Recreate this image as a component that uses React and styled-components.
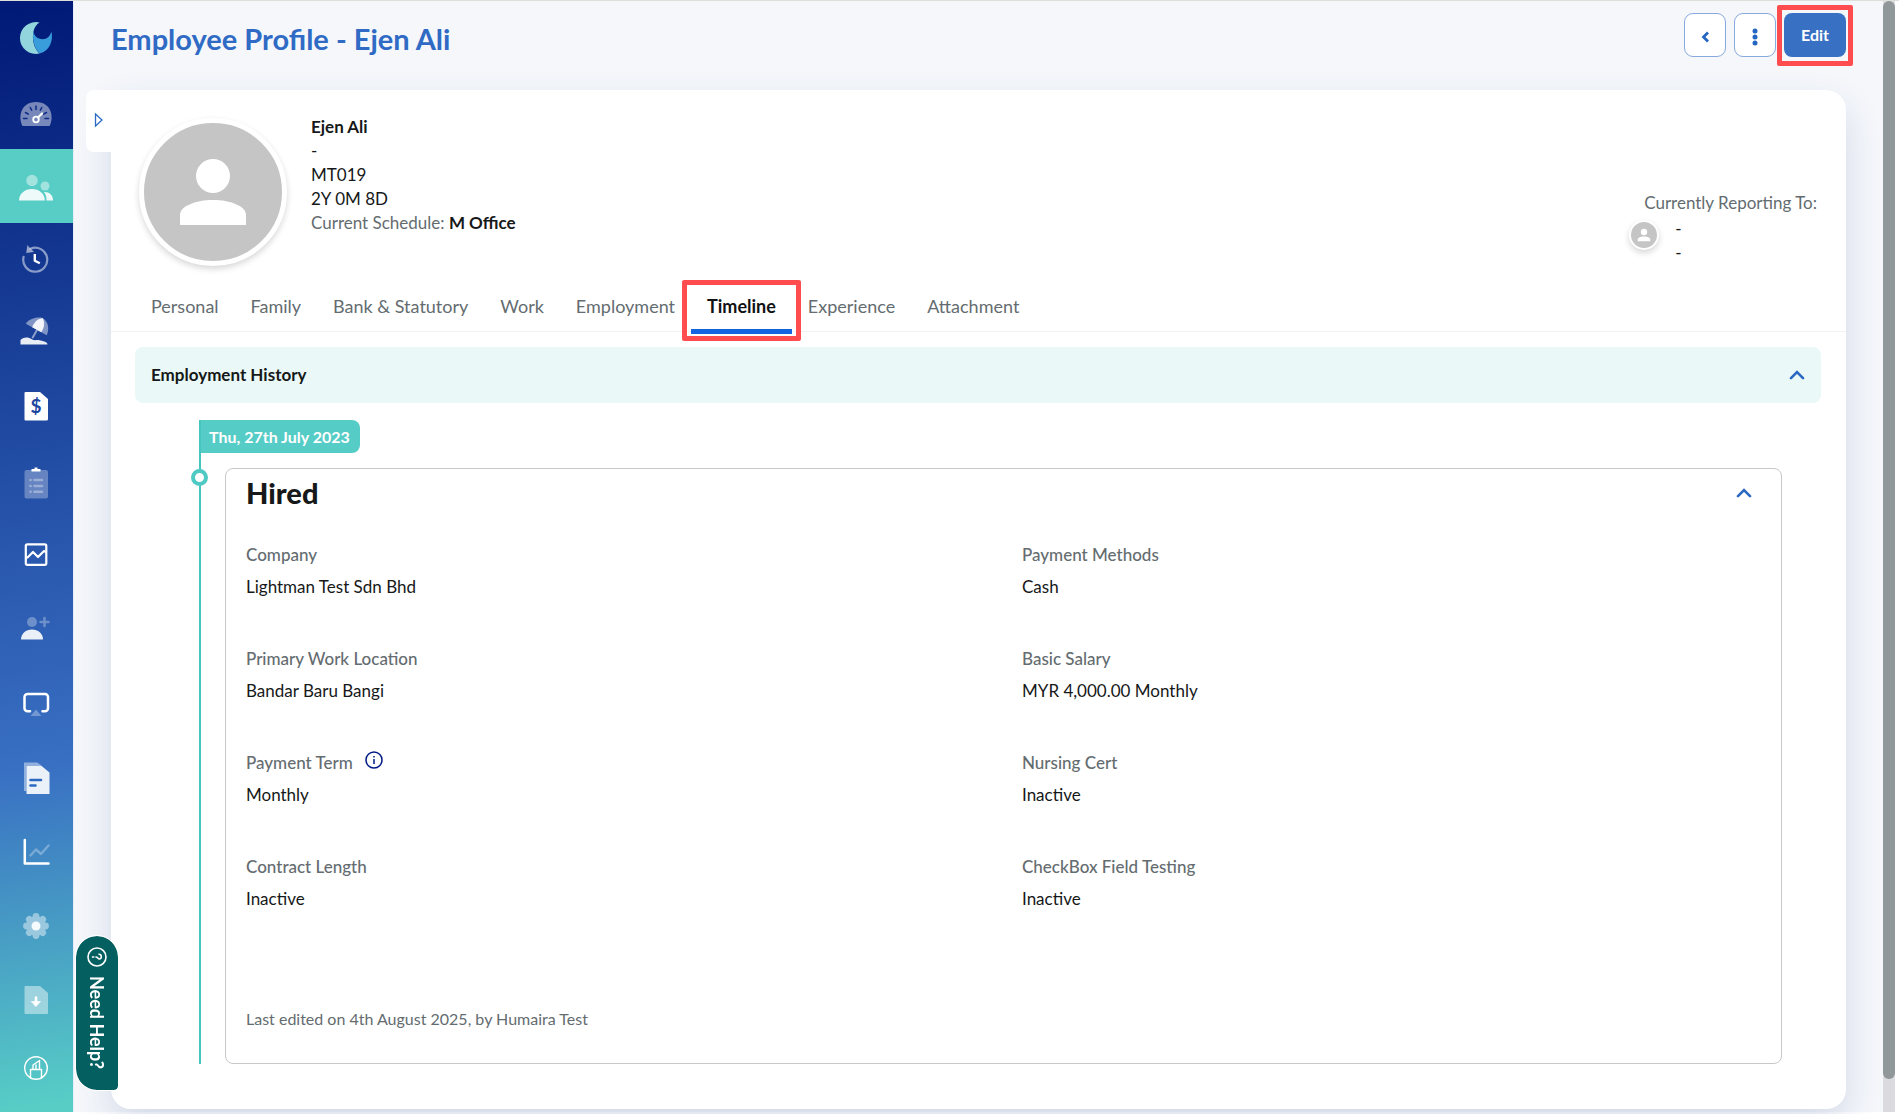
import React, { useState } from "react";
import styled, { createGlobalStyle } from "styled-components";

const GlobalStyle = createGlobalStyle`
  *, *::before, *::after {
    box-sizing: border-box;
  }
  body {
    margin: 0;
    background-color: #fff;
    color: #161819;
    font-family: Lato, "Open Sans", sans-serif;
    font-size: 17px;
    line-height: 24px;
  }
  button {
    font-family: inherit;
    cursor: pointer;
  }
  h1, h2, h3, p, dl, dd {
    margin: 0;
  }
`;

const Shell = styled.div`
  display: flex;
  min-height: 100vh;
  border-top: 1px solid #dddfdb;
  border-bottom: 2px solid #fff;
  padding-right: 4px;
`;

const Sidebar = styled.nav`
  display: flex;
  flex-direction: column;
  flex: none;
  width: 74px;
  background: linear-gradient(172deg, #001976 0%, #3970c3 69%, #57cdc6 99%);
  border-right: 1px solid #e6ecf8;
`;

const SideLink = styled.a`
  display: flex;
  align-items: center;
  justify-content: center;
  height: ${(props) => props.$height || 74}px;
  padding-right: 1px;
  background-color: ${(props) => (props.$active ? "#57cdc6" : "transparent")};
  svg {
    width: 36px;
    height: 36px;
  }
`;

const Main = styled.main`
  display: flex;
  flex-direction: column;
  flex: 1;
  min-width: 0;
  padding: 12px 37px 3px;
  background-color: #f5f7fb;
`;

const Header = styled.header`
  display: flex;
  justify-content: space-between;
  height: 77px;
`;

const Title = styled.h1`
  color: #2f6bc4;
  font-size: 29px;
  font-weight: 700;
  line-height: 52px;
`;

const Actions = styled.div`
  display: flex;
  gap: 8px;
  height: 44px;
`;

const IconButton = styled.button`
  display: flex;
  align-items: center;
  justify-content: center;
  width: 42px;
  padding: 4px 0 0;
  border: 1px solid #86a9de;
  border-radius: 9px;
  background-color: #fff;
  color: #2566c2;
`;

const EditButton = styled.button`
  width: 62px;
  height: 44px;
  padding: 0 0 2px;
  border: none;
  border-radius: 8px;
  background-color: #3871c4;
  color: #fff;
  font-size: 16px;
  font-weight: 700;
`;

const Highlight = styled.div`
  position: relative;
  &::after {
    content: "";
    position: absolute;
    inset: ${(props) => props.$inset};
    border: 5px solid #ff4d4f;
    border-radius: 2px;
    pointer-events: none;
  }
`;

const Card = styled.section`
  position: relative;
  flex: 1;
  padding-bottom: 45px;
  border-radius: 0 20px 20px 20px;
  background-color: #fff;
  box-shadow: 0 16px 36px rgba(40, 70, 130, 0.16);
`;

const Drawer = styled.button`
  position: absolute;
  left: -25px;
  top: 0;
  display: flex;
  align-items: center;
  width: 40px;
  height: 62px;
  padding: 0 0 2px 8px;
  border: none;
  border-radius: 8px 0 0 8px;
  background-color: #fff;
`;

const Profile = styled.div`
  display: flex;
  gap: 24px;
  padding: 25px 29px 0 28px;
  height: 184px;
`;

const Avatar = styled.span`
  flex: none;
  width: ${(props) => props.$size}px;
  height: ${(props) => props.$size}px;
  margin-top: 3px;
  border: ${(props) => props.$ring}px solid #fff;
  border-radius: 50%;
  background-color: #c5c5c5;
  box-shadow: 0 3px 6px rgba(0, 0, 0, 0.16);
  overflow: hidden;
  svg {
    display: block;
    width: 100%;
    height: 100%;
  }
`;

const Info = styled.div`
  flex: 1;
  h2 {
    font-size: 17px;
    line-height: 24px;
  }
`;

const Muted = styled.span`
  color: #646c70;
`;

const Reporting = styled.div`
  padding-top: 76px;
  color: #646c70;
`;

const Manager = styled.div`
  display: flex;
  gap: 16px;
  margin: 2px 0 0 -15px;
  color: #161819;
`;

const Tabs = styled.div`
  display: flex;
  height: 58px;
  padding: 0 24px;
  border-bottom: 1px solid #f1f2f3;
`;

const Tab = styled.button`
  height: 60px;
  padding: 8px 16px 0;
  border: none;
  border-bottom: 5px solid ${(props) => (props.$active ? "#1264e0" : "transparent")};
  background: none;
  color: ${(props) => (props.$active ? "#101214" : "#646c70")};
  font-size: 18px;
  font-weight: ${(props) => (props.$active ? 700 : 400)};
  white-space: nowrap;
`;

const SectionBar = styled.div`
  display: flex;
  align-items: center;
  justify-content: space-between;
  height: 56px;
  margin: 15px 25px 0 24px;
  padding: 0 16px;
  border-radius: 8px;
  background-color: #eaf8f7;
  h3 {
    font-size: 17px;
    font-weight: 700;
  }
`;

const Toggle = styled.button`
  display: flex;
  padding: 0;
  border: none;
  background: none;
`;

const Timeline = styled.div`
  margin: 17px 64px 0 88px;
  border-left: 2px solid #45c5bf;
`;

const DateBadge = styled.span`
  display: inline-block;
  padding: 0 10px 0 8px;
  border-radius: 0 8px 8px 0;
  background-color: #56ccc6;
  color: #fff;
  font-size: 16px;
  font-weight: 700;
  line-height: 33px;
`;

const Event = styled.article`
  position: relative;
  display: flex;
  flex-direction: column;
  margin: 15px 0 0 24px;
  min-height: 596px;
  padding: 7px 20px 32px;
  border: 1px solid #c8c8c8;
  border-radius: 8px;
  &::before {
    content: "";
    position: absolute;
    left: -35px;
    top: 0;
    width: 17px;
    height: 17px;
    border: 4px solid #4fc9c3;
    border-radius: 50%;
    background-color: #fff;
  }
`;

const EventHead = styled.div`
  display: flex;
  align-items: center;
  justify-content: space-between;
  padding-right: 9px;
  height: 34px;
  h3 {
    font-size: 29px;
    font-weight: 900;
    line-height: 34px;
  }
`;

const Fields = styled.dl`
  display: grid;
  grid-template-columns: 1fr 1fr;
  grid-auto-rows: 104px;
  column-gap: 37px;
  padding-top: 33px;
`;

const Field = styled.div`
  dt {
    display: flex;
    gap: 12px;
    height: 32px;
    color: #646c70;
    font-weight: 500;
  }
`;

const Footnote = styled.p`
  margin-top: auto;
  color: #646c70;
  font-size: 16px;
`;

const HelpButton = styled.button`
  position: fixed;
  left: 76px;
  bottom: 24px;
  display: flex;
  align-items: center;
  gap: 9px;
  width: 42px;
  padding: 11px 0 21px;
  border: none;
  border-radius: 21px 21px 4px 21px;
  outline: 1px solid #fff;
  background-color: #045f61;
  color: #fff;
  font-size: 18px;
  font-weight: 700;
  writing-mode: vertical-rl;
`;

const ScrollTrack = styled.div`
  flex: none;
  width: 12px;
  background-color: #dbdbdf;
`;

const ScrollThumb = styled.div`
  height: 97%;
  border-radius: 6px;
  background-color: #90989a;
`;

const Icon = ({ children }) => (
  <svg viewBox="0 0 36 36" fill="none" strokeLinecap="round" strokeLinejoin="round" aria-hidden="true">
    {children}
  </svg>
);

const Person = () => (
  <svg viewBox="0 0 138 138" aria-hidden="true">
    <circle cx="69" cy="53" r="17" fill="#fff" />
    <path d="M36 102V92c0-9 16-15 33-15s33 6 33 15v10z" fill="#fff" />
  </svg>
);

const Chevron = () => (
  <svg width="16" height="10" viewBox="0 0 16 10" fill="none" aria-hidden="true">
    <path d="M2 8.2L8 2.2l6 6" stroke="#2b68c2" strokeWidth="2.6" strokeLinecap="round" />
  </svg>
);

const light = { fill: "#fff", fillOpacity: 0.9 };
const faded = { fill: "#fff", fillOpacity: 0.45 };

const menu = [
  {
    label: "Dashboard",
    icon: (
      <>
        <path d="M4.5 32C0 24 2 8 18 8s18 16 13.5 24z" {...faded} />
        <path
          d="M5.5 24.5H9M7.5 18.5l2.8 1.6M12.2 13.5l1.5 2.7M18 12v3.5M23.8 13.5l-1.5 2.7M28.5 18.5l-2.8 1.6M30.5 24.5H27"
          stroke="#0b2a86"
          strokeWidth="1.5"
        />
        <circle cx="18" cy="25.5" r="2.8" stroke="#fff" strokeWidth="1.8" />
        <path d="M20 23.5l4-4" stroke="#fff" strokeWidth="2.2" />
      </>
    ),
  },
  {
    label: "Employees",
    icon: (
      <>
        <circle cx="14" cy="12.5" r="5.8" {...faded} />
        <circle cx="27" cy="18" r="4.5" {...faded} />
        <path d="M1 32.5C1 25.5 7 21 14 21s12.8 4.5 12.8 11.5z" {...light} />
        <path d="M26.5 24c5 0 8.5 3 8.5 8.5h-6.5c0-3.5-.5-5.8-2.5-8.5z" {...light} />
      </>
    ),
  },
  {
    label: "Attendance",
    icon: (
      <>
        <path d="M12.5 6.7A12 12 0 1 1 5.6 14.8" stroke="#fff" strokeOpacity="0.5" strokeWidth="2.2" />
        <path d="M9.5 3.8L8.5 10.8l7-1z" fill="#fff" fillOpacity="0.55" stroke="#fff" strokeOpacity="0.2" />
        <path d="M16.8 12v6.7l5 2.6" stroke="#fff" strokeWidth="2.4" strokeLinecap="butt" />
      </>
    ),
  },
  {
    label: "Leave",
    icon: (
      <>
        <path d="M7.8 7.7C11 3 18 .5 24.8 2c5 3.500 7 10 4 17.300z" {...faded} />
        <path d="M14.2 11.3C16 6 20 2.5 24.8 2.3c2 4 1.7 9.7-1.6 14z" {...light} />
        <path d="M18.7 14.5l-4 7" stroke="#fff" strokeOpacity="0.5" strokeWidth="2" />
        <path d="M2.5 28.5V24c2-3 8-3.5 11-1 2 2 5 .5 9 1.5s7 1.5 7 4z" {...light} />
      </>
    ),
  },
  {
    label: "Payroll",
    icon: (
      <>
        <path d="M7.5 2H22l8 7v20a1.5 1.5 0 0 1-1.5 1.5h-21a1 1 0 0 1-1-1V3a1 1 0 0 1 1-1z" fill="#fff" />
        <text x="18" y="23" textAnchor="middle" fontSize="19" fontWeight="700" fill="#1c469f">
          $
        </text>
      </>
    ),
  },
  {
    label: "Claims",
    icon: (
      <>
        <rect x="6.5" y="6" width="23.5" height="28.5" rx="2" fill="#fff" fillOpacity="0.3" />
        <path d="M13.5 7.5V5h3V3.5h3V5h3v2.5z" fill="#fff" />
        <path
          d="M12.5 16h.1M12.5 22h.1M12.5 27.7h.1M16.5 16H24M16.5 22H24M16.5 27.7H24"
          stroke="#fff"
          strokeOpacity="0.35"
          strokeWidth="2.6"
        />
      </>
    ),
  },
  {
    label: "Insights",
    icon: (
      <>
        <rect x="7.8" y="6.3" width="20.5" height="20.5" rx="1.5" stroke="#fff" strokeWidth="2.2" />
        <path d="M8 19.5h1.5L15 14l5 5 6-6 2 1" stroke="#fff" strokeWidth="2.2" />
      </>
    ),
  },
  {
    label: "Recruitment",
    icon: (
      <>
        <circle cx="14" cy="10" r="5" fill="#fff" fillOpacity="0.3" />
        <path d="M26.5 6v8M22.5 10h8" stroke="#fff" strokeOpacity="0.3" strokeWidth="2.6" />
        <path d="M3 27.5C3 21.500 8 17.5 14 17.5s11 4 11 10z" {...light} />
      </>
    ),
  },
  {
    label: "Training",
    icon: (
      <>
        <path
          d="M12 25.2H9.5a3 3 0 0 1-3-3V11a3 3 0 0 1 3-3H27a3 3 0 0 1 3 3v11.2a3 3 0 0 1-3 3h-2.5"
          stroke="#fff"
          strokeWidth="2.5"
        />
        <path d="M18 23.5l5.5 6.5h-11z" fill="#fff" fillOpacity="0.3" />
      </>
    ),
  },
  {
    label: "Documents",
    icon: (
      <>
        <path d="M6 2.5h13L23 5H8.5v26H6z" {...faded} />
        <path d="M8.5 5.5H23l8.5 7V34h-23z" {...light} />
        <path d="M12.5 20H23M12.5 25.5h5" stroke="#2d68c0" strokeWidth="2.6" />
      </>
    ),
  },
  {
    label: "Reports",
    icon: (
      <>
        <path d="M6.8 6v23.5h23.7" stroke="#fff" strokeWidth="2.5" />
        <path d="M12.5 21.5l5.5-6 5 4.5 7.5-8.5" stroke="#fff" strokeOpacity="0.3" strokeWidth="2.4" />
      </>
    ),
  },
  {
    label: "Settings",
    icon: (
      <>
        <g fill="#fff" opacity="0.45">
          <circle cx="18" cy="18" r="10" />
          {[0, 45, 90, 135, 180, 225, 270, 315].map((deg) => (
            <circle key={deg} cx="18" cy="8.5" r="3.4" transform={`rotate(${deg} 18 18)`} />
          ))}
        </g>
        <circle cx="18" cy="18" r="4.5" {...light} />
      </>
    ),
  },
  {
    label: "Downloads",
    icon: (
      <>
        <path d="M7.5 4H22l8 7v20a1 1 0 0 1-1 1H7.5a1 1 0 0 1-1-1V5a1 1 0 0 1 1-1z" {...faded} />
        <path d="M18 15.5V21" stroke="#fff" strokeWidth="2.6" />
        <path d="M13.5 19.5h9l-4.5 5z" fill="#fff" stroke="#fff" strokeWidth="0.6" />
      </>
    ),
  },
  {
    label: "Academy",
    height: 62,
    icon: (
      <>
        <circle cx="18" cy="18" r="11.3" stroke="#fff" strokeWidth="1.4" />
        <path
          d="M12.5 28v-8.5h11V28M15 19.500V15l6.500-4.500v9M18 15v4.500"
          stroke="#fff"
          strokeWidth="1.4"
        />
      </>
    ),
  },
];

const tabs = ["Personal", "Family", "Bank & Statutory", "Work", "Employment", "Timeline", "Experience", "Attachment"];

const fields = [
  { label: "Company", value: "Lightman Test Sdn Bhd" },
  { label: "Payment Methods", value: "Cash" },
  { label: "Primary Work Location", value: "Bandar Baru Bangi" },
  { label: "Basic Salary", value: "MYR 4,000.00 Monthly" },
  { label: "Payment Term", value: "Monthly", hint: true },
  { label: "Nursing Cert", value: "Inactive" },
  { label: "Contract Length", value: "Inactive" },
  { label: "CheckBox Field Testing", value: "Inactive" },
];

const SideMenu = () => (
  <Sidebar>
    <SideLink href="#home" aria-label="Home">
      <Icon>
        <path d="M21.5 2.4A16 16 0 1 0 21.5 33.6C15 27 14 18 15.6 11c1-4 3-7 5.900-8.600z" fill="#92d5dd" />
        <path
          d="M15.6 11c0 5 4.4 8.2 8.9 8.2s8-3.2 8.9-7.7C35.5 20 32 31 21.5 33.6 15.5 27 14 18 15.6 11z"
          fill="#3a9ddb"
        />
      </Icon>
    </SideLink>
    {menu.map((item) => (
      <SideLink
        key={item.label}
        href={`#${item.label.toLowerCase()}`}
        aria-label={item.label}
        $active={item.label === "Employees"}
        $height={item.height}
      >
        <Icon>{item.icon}</Icon>
      </SideLink>
    ))}
  </Sidebar>
);

const TabItem = ({ name, active, onSelect }) => (
  <Tab role="tab" aria-selected={active} $active={active} onClick={() => onSelect(name)}>
    {name}
  </Tab>
);

const App = () => {
  const [activeTab, setActiveTab] = useState("Timeline");

  return (
    <>
      <GlobalStyle />
      <Shell>
        <SideMenu />
        <Main>
          <Header>
            <Title>Employee Profile - Ejen Ali</Title>
            <Actions>
              <IconButton aria-label="Back">
                <svg width="10" height="12" viewBox="0 0 10 12" fill="none">
                  <path d="M8 1.500L3.500 6 8 10.500" stroke="currentColor" strokeWidth="2.8" />
                </svg>
              </IconButton>
              <IconButton aria-label="More">
                <svg width="6" height="18" viewBox="0 0 6 18" fill="currentColor">
                  <circle cx="3" cy="3" r="2.5" />
                  <circle cx="3" cy="9" r="2.5" />
                  <circle cx="3" cy="15" r="2.5" />
                </svg>
              </IconButton>
              <Highlight $inset="-8px -7px -9px -7px">
                <EditButton>Edit</EditButton>
              </Highlight>
            </Actions>
          </Header>

          <Card>
            <Drawer aria-label="Open employee list">
              <svg width="10" height="16" viewBox="0 0 10 16" fill="none">
                <path d="M1.500 2v12L8 8z" stroke="#2f6bc4" strokeWidth="1.3" />
              </svg>
            </Drawer>
            <Profile>
              <Avatar $size={148} $ring={5}>
                <Person />
              </Avatar>
              <Info>
                <h2>Ejen Ali</h2>
                <div>-</div>
                <div>MT019</div>
                <div>2Y 0M 8D</div>
                <div>
                  <Muted>Current Schedule:</Muted> <b>M Office</b>
                </div>
              </Info>
              <Reporting>
                <p>Currently Reporting To:</p>
                <Manager>
                  <Avatar $size={30} $ring={2}>
                    <Person />
                  </Avatar>
                  <div>
                    <div>-</div>
                    <div>-</div>
                  </div>
                </Manager>
              </Reporting>
            </Profile>

            <Tabs role="tablist">
              {tabs.map((name) =>
                name === "Timeline" ? (
                  <Highlight key={name} $inset="6px -9px -10px -9px">
                    <TabItem name={name} active={name === activeTab} onSelect={setActiveTab} />
                  </Highlight>
                ) : (
                  <TabItem key={name} name={name} active={name === activeTab} onSelect={setActiveTab} />
                )
              )}
            </Tabs>

            <SectionBar>
              <h3>Employment History</h3>
              <Toggle aria-label="Collapse employment history">
                <Chevron />
              </Toggle>
            </SectionBar>

            <Timeline>
              <DateBadge>Thu, 27th July 2023</DateBadge>
              <Event>
                <EventHead>
                  <h3>Hired</h3>
                  <Toggle aria-label="Collapse event">
                    <Chevron />
                  </Toggle>
                </EventHead>
                <Fields>
                  {fields.map((field) => (
                    <Field key={field.label}>
                      <dt>
                        {field.label}
                        {field.hint && (
                          <svg width="18" height="18" viewBox="0 0 18 18" fill="none" stroke="#001b85" strokeWidth="1.5">
                            <circle cx="9" cy="9" r="8" />
                            <path d="M9 8v5M9 5v1.5" />
                          </svg>
                        )}
                      </dt>
                      <dd>{field.value}</dd>
                    </Field>
                  ))}
                </Fields>
                <Footnote>Last edited on 4th August 2025, by Humaira Test</Footnote>
              </Event>
            </Timeline>
          </Card>
        </Main>
        <ScrollTrack>
          <ScrollThumb />
        </ScrollTrack>
      </Shell>

      <HelpButton>
        <svg width="20" height="20" viewBox="0 0 20 20" fill="none" stroke="#fff" strokeWidth="1.6">
          <circle cx="10" cy="10" r="9" />
          <path d="M12 7.200c3-.2 3 4.800.4 4.800-1.600 0-1.600-2-3.400-2M6.800 10H5.500" strokeLinecap="round" />
        </svg>
        Need Help?
      </HelpButton>
    </>
  );
};

export default App;
